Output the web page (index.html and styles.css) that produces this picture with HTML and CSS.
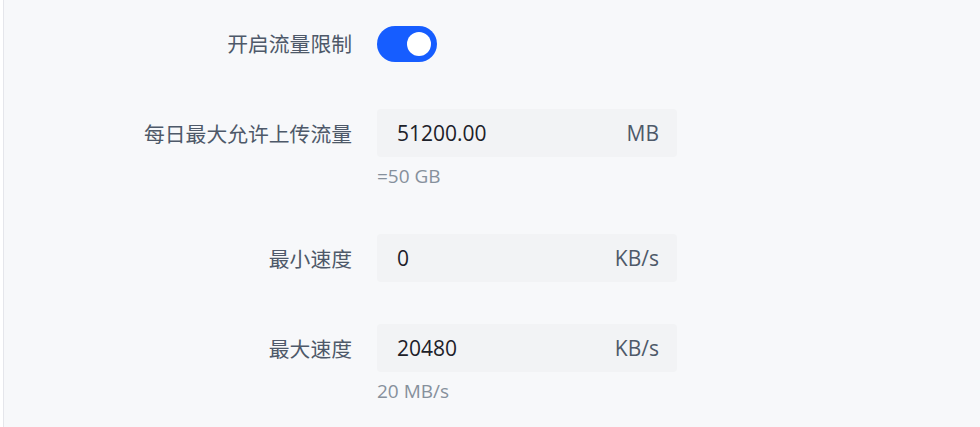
FILE: index.html
```html
<!DOCTYPE html>
<html lang="zh-CN">
<head>
<meta charset="utf-8">
<title>流量限制</title>
<link rel="stylesheet" href="styles.css">
</head>
<body>
<div class="panel">
  <form class="form">
    <div class="item">
      <label class="label">开启流量限制</label>
      <div class="control">
        <button type="button" class="switch" aria-checked="true"><span class="knob"></span></button>
      </div>
    </div>
    <div class="item">
      <label class="label">每日最大允许上传流量</label>
      <div class="control">
        <div class="input"><span class="value">51200.00</span><span class="unit">MB</span></div>
        <div class="hint">=50 GB</div>
      </div>
    </div>
    <div class="item">
      <label class="label">最小速度</label>
      <div class="control">
        <div class="input"><span class="value">0</span><span class="unit">KB/s</span></div>
      </div>
    </div>
    <div class="item">
      <label class="label">最大速度</label>
      <div class="control">
        <div class="input"><span class="value">20480</span><span class="unit">KB/s</span></div>
        <div class="hint">20 MB/s</div>
      </div>
    </div>
  </form>
</div>
</body>
</html>
```
FILE: styles.css
```css
html, body {
  margin: 0;
  padding: 0;
  background: #ffffff;
  height: 100%;
  overflow: hidden;
}
body {
  font-family: "Open Sans", "Noto Sans CJK SC", sans-serif;
  font-size: 21px;
  color: #1d2129;
  padding-left: 3px;
  box-sizing: border-box;
}
.panel {
  background: #f7f8fa;
  border-left: 1px solid #e5e6eb;
  height: 100%;
  box-sizing: border-box;
}
.form {
  padding-top: 19px;
  display: flex;
  flex-direction: column;
  gap: 42px;
}
.item {
  display: flex;
  align-items: flex-start;
}
.label {
  width: 348px;
  flex: none;
  padding-right: 25px;
  text-align: right;
  height: 48px;
  line-height: 48px;
  color: #4e5969;
  font-family: "Noto Sans CJK SC", sans-serif;
  font-size: 20.8px;
}
.control {
  display: flex;
  flex-direction: column;
}
.switch {
  margin-top: 7px;
  width: 60px;
  height: 36px;
  border: none;
  border-radius: 18px;
  background: #165dff;
  padding: 0 6px;
  display: flex;
  align-items: center;
  justify-content: flex-end;
}
.knob {
  width: 24px;
  height: 24px;
  border-radius: 50%;
  background: #ffffff;
}
.input {
  width: 300px;
  height: 48px;
  box-sizing: border-box;
  background: #f2f3f5;
  border-radius: 4px;
  display: flex;
  align-items: center;
  justify-content: space-between;
  padding: 0 18px 0 20px;
}
.value {
  color: #1d2129;
}
.unit {
  color: #4e5969;
}
.hint {
  margin: 7px 0 4px;
  line-height: 24px;
  font-size: 19px;
  color: #86909c;
}
```
